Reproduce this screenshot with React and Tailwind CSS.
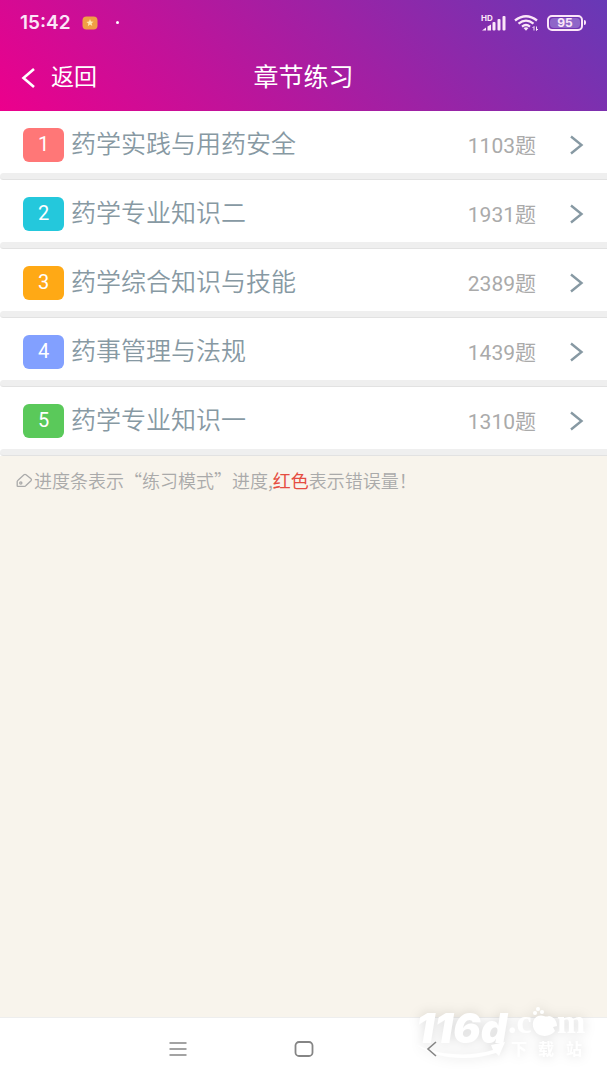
import React from 'react';
import clsx from 'clsx';

const chapters = [
  { id: 1, title: '药学实践与用药安全', count: 1103, color: 'bg-[#ff7777]' },
  { id: 2, title: '药学专业知识二', count: 1931, color: 'bg-[#24c8dc]' },
  { id: 3, title: '药学综合知识与技能', count: 2389, color: 'bg-[#ffa915]' },
  { id: 4, title: '药事管理与法规', count: 1439, color: 'bg-[#82a0ff]' },
  { id: 5, title: '药学专业知识一', count: 1310, color: 'bg-[#5ac95a]' },
];

function StatusBar() {
  return (
    <div className="flex h-11 items-center justify-between pt-px pr-[21px] pl-5 text-[#fbe6f8]">
      <div className="flex items-center">
        <span className="font-['Inter',sans-serif] text-[19px] leading-none font-semibold">15:42</span>
        <svg className="ml-[11px] h-[14px] w-4" viewBox="0 0 16 14" aria-hidden="true">
          <rect x="0.5" y="0.5" width="15" height="13" rx="4" fill="#f0a044" />
          <path d="M8 3 9 5.6l2.6.2-2 1.5.7 2.7L8 8.5l-2.2 1.7.6-2.8-2-1.5 2.6-.3Z" fill="#ffe9b0" />
        </svg>
        <span className="ml-[18px] size-[3px] rounded-full bg-white" />
      </div>

      <div className="flex items-center gap-2">
        {/* Signal */}
        <svg className="h-[18px] w-[26px]" viewBox="0 0 26 18" fill="currentColor" aria-hidden="true">
          <text x="1" y="7" fontSize="8" fontWeight="700" fontFamily="Inter, sans-serif">HD</text>
          <path d="M2 16.5 6 13.5v3ZM7.5 12.5 11 10.5v6H7.5Z" />
          <rect x="12.5" y="8" width="3" height="8.5" rx="1" />
          <rect x="17.5" y="5" width="3" height="11.5" rx="1" />
          <rect x="22.5" y="2" width="3" height="14.5" rx="1" />
        </svg>
        {/* Wifi */}
        <svg className="h-[18px] w-[25px]" viewBox="0 0 25 18" fill="none" stroke="currentColor" aria-hidden="true">
          <path d="M1 6.5Q12 -2 23 6.5" strokeWidth="2.4" />
          <path d="M4.5 9.6Q12 3.6 19.5 9.6" strokeWidth="2.3" />
          <path d="M8 12.6Q12 9.4 16 12.6" strokeWidth="2.2" />
          <path d="M9.5 14 12 16.8 14.5 14Q12 12.4 9.5 14Z" fill="currentColor" stroke="none" />
          <path d="M20 16.5v-4l-1.5 1.5M22.5 12.5v4l1.5-1.5" strokeWidth="1" />
        </svg>
        {/* Battery */}
        <div className="flex items-center gap-px">
          <div className="flex h-4 w-9 items-center rounded-[5px] border-2 border-current p-px">
            <span className="flex h-full w-full items-center justify-center rounded-sm bg-[#8f66c8] font-['Inter',sans-serif] text-xs leading-none font-bold">
              95
            </span>
          </div>
          <span className="h-[5px] w-[2px] rounded-r-sm bg-current" />
        </div>
      </div>
    </div>
  );
}

function Header() {
  return (
    <header className="bg-[linear-gradient(45deg,#ec008c,#6739b6)] text-white">
      <StatusBar />
      <div className="grid h-[67px] grid-cols-[1fr_auto_1fr] items-center px-5">
        <button type="button" className="flex items-center gap-[11px] justify-self-start text-[23px] leading-none">
          <svg className="h-6 w-5" viewBox="0 0 20 24" fill="none" stroke="currentColor" strokeWidth="2.6" aria-hidden="true">
            <path d="M14 3 3.5 12 14 21" />
          </svg>
          <span>返回</span>
        </button>
        <h1 className="text-[25px] leading-none font-normal">章节练习</h1>
      </div>
    </header>
  );
}

function ChapterRow({ chapter }) {
  return (
    <li className="bg-white">
      <button type="button" className="flex h-[62px] w-full items-center pt-[5px] pr-[23px] pl-[23px] text-left">
        <span
          className={clsx(
            'flex h-[34px] w-[41px] items-center justify-center rounded-md pb-px text-xl leading-none text-white',
            chapter.color,
          )}
        >
          {chapter.id}
        </span>
        <span className="ml-[7px] flex-1 text-[25px] leading-none font-[350] text-[#8799a3]">{chapter.title}</span>
        <span className="pt-1 text-[21px] leading-none font-normal text-[#aaaaaa]">{chapter.count}题</span>
        <svg className="ml-8 h-5 w-4" viewBox="0 0 16 20" fill="none" stroke="#8799a3" strokeWidth="2.4" aria-hidden="true">
          <path d="M3 1.5 13.5 10 3 18.5" />
        </svg>
      </button>
      {/* Progress track */}
      <div className="h-[7px] rounded-l-md border-b border-[#e2e2e2] bg-[#efefef]" />
    </li>
  );
}

function SiteMark() {
  return (
    <svg
      className="pointer-events-none absolute right-3 bottom-3 h-[76px] w-[184px] drop-shadow-[0_0_6px_rgba(0,0,0,0.14)]"
      viewBox="0 -12 184 76"
      fill="#ffffff"
      aria-hidden="true"
    >
      <text x="5" y="39" fontSize="41" fontWeight="900" fontStyle="italic" fontFamily="Inter, sans-serif">116d</text>
      <path d="M6 41C28 52 60 53 82 46l-2-5 14-3-6 14-3-3C60 57 26 56 6 41Z" />
      <text x="97" y="29" fontSize="34" fontWeight="700" fontFamily="Liberation Serif, serif">.c</text>
      <path d="M127 12c5-2 7 2 11 0 5 1 8 5 8 10l-4 1 2 4c-4 6-16 7-20 0-4-6-2-13 3-15Z" />
      <circle cx="124" cy="9" r="2" />
      <circle cx="127" cy="5" r="2" />
      <circle cx="131" cy="8" r="2" />
      <text x="146" y="29" fontSize="34" fontWeight="700" fontFamily="Liberation Serif, serif">m</text>
      <g fontSize="16" fontWeight="700" fontFamily="Noto Sans CJK SC, sans-serif">
        <text x="100" y="51">下</text>
        <text x="127" y="51">载</text>
        <text x="155" y="51">站</text>
      </g>
    </svg>
  );
}

function SystemNav() {
  return (
    <nav className="relative flex h-[63px] items-center justify-center gap-[102px] border-t border-[#eeeeee] bg-white text-[#858585]">
      <button type="button" aria-label="菜单">
        <svg className="h-6 w-6" viewBox="0 0 24 24" stroke="currentColor" strokeWidth="1.4">
          <path d="M3.5 6h17M3.5 12h17M3.5 18h17" />
        </svg>
      </button>
      <button type="button" aria-label="主页">
        <svg className="h-6 w-6" viewBox="0 0 24 24" fill="none" stroke="currentColor" strokeWidth="1.8">
          <rect x="3.5" y="5" width="17" height="14" rx="3.5" />
        </svg>
      </button>
      <button type="button" aria-label="后退" className="relative z-10">
        <svg className="h-6 w-6" viewBox="0 0 24 24" fill="none" stroke="currentColor" strokeWidth="1.6">
          <path d="M18 5 10 12l8 7" />
        </svg>
      </button>
      <SiteMark />
    </nav>
  );
}

export default function App() {
  return (
    <div className="flex min-h-screen flex-col bg-[#f8f4ec] font-['Roboto','Noto_Sans_CJK_SC',sans-serif]">
      <Header />
      <main className="flex-1">
        <ul>
          {chapters.map((chapter) => (
            <ChapterRow key={chapter.id} chapter={chapter} />
          ))}
        </ul>
        <p className="flex items-center px-4 pt-[10px] font-['Noto_Sans_CJK_SC',sans-serif] text-lg font-[350] text-[#aaaaaa]">
          <svg className="mr-px h-[15px] w-[17px] shrink-0" viewBox="0 0 17 15" fill="none" stroke="currentColor" strokeWidth="1.3" aria-hidden="true">
            <path d="M1.2 13V8.6Q1.2 7.8 2 7.2L8 1.8Q9 1 10 1.8L15 5.8Q16 6.8 15 7.8L10 12.5Q9.4 13.4 8.4 13.4H1.8Q1.2 13.4 1.2 13Z" />
            <circle cx="4.8" cy="10" r="1.1" />
          </svg>
          <span>
            进度条表示“练习模式”进度,<span className="font-normal text-[#e54d42]">红色</span>表示错误量！
          </span>
        </p>
      </main>
      <SystemNav />
    </div>
  );
}
